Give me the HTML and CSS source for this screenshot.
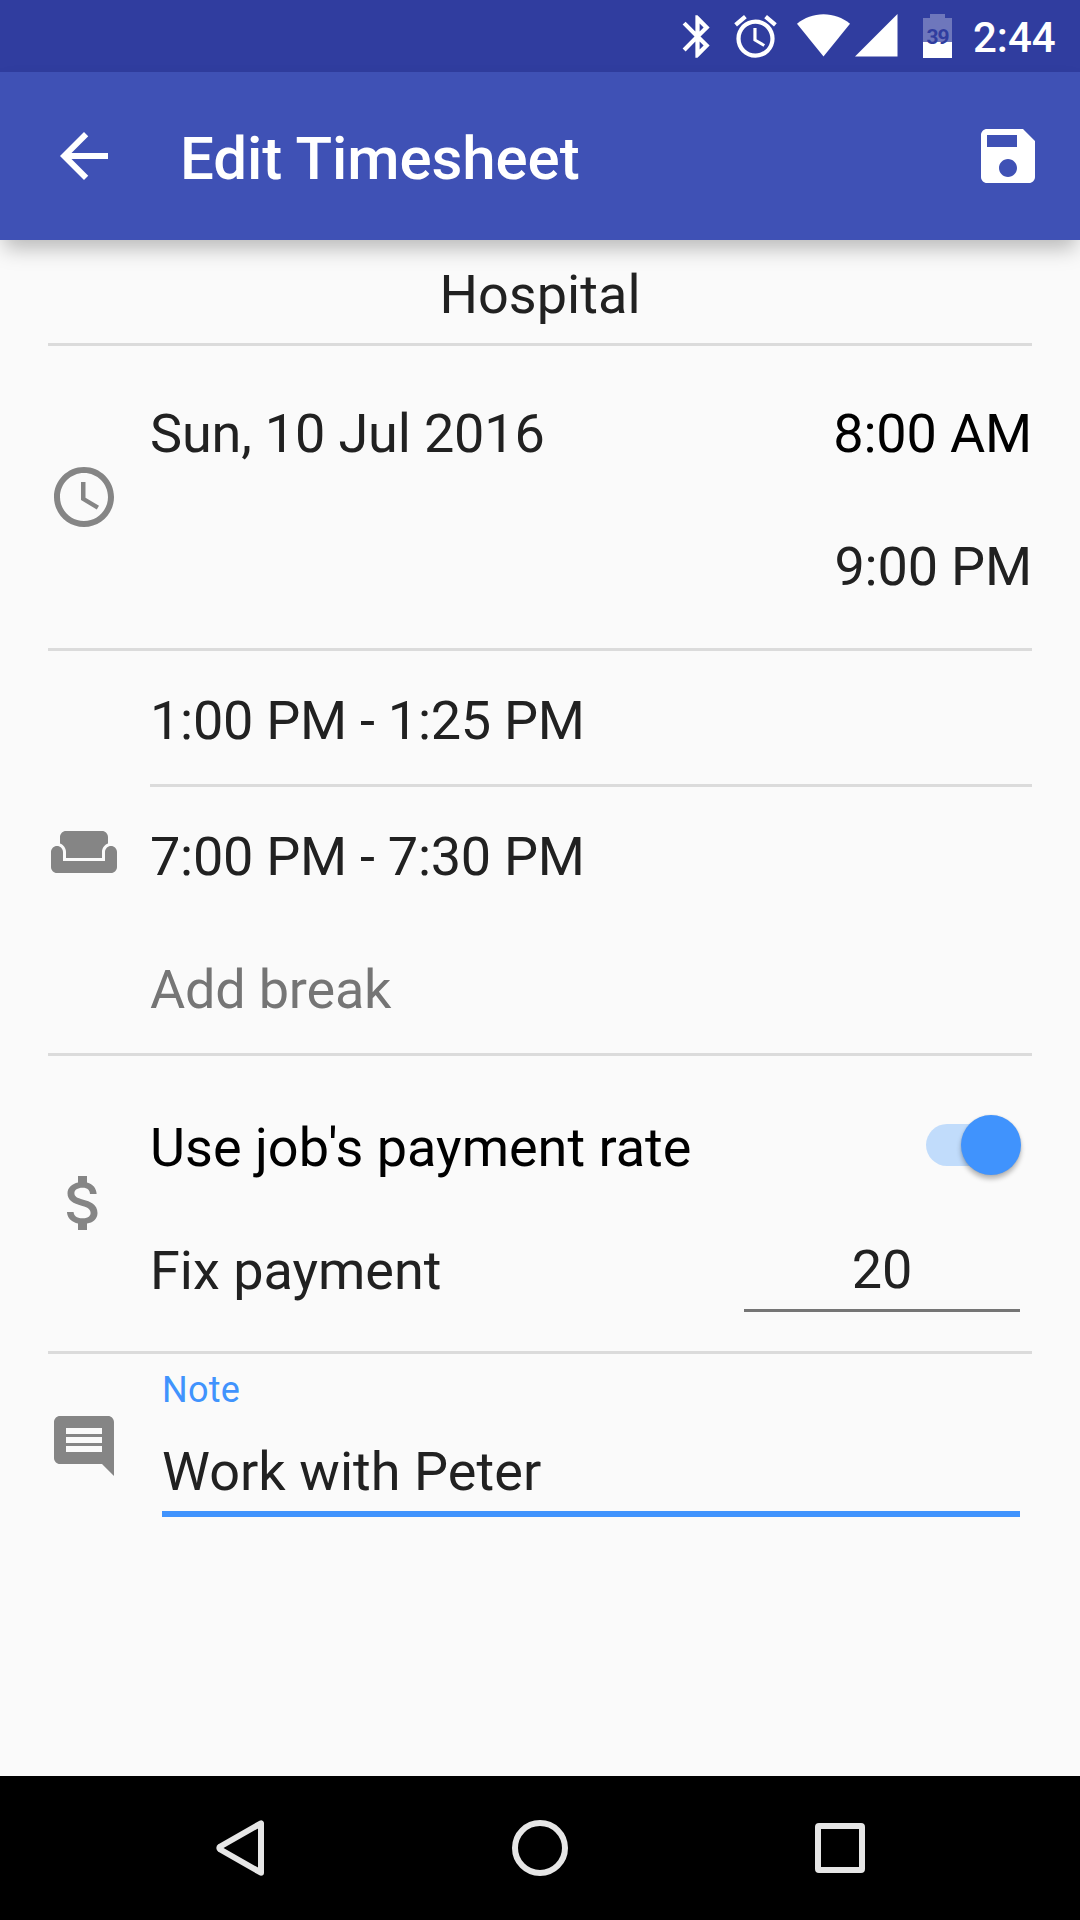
FILE: index.html
```html
<!DOCTYPE html>
<html lang="en">
<head>
<meta charset="utf-8">
<title>Edit Timesheet</title>
<link rel="stylesheet" href="styles.css">
</head>
<body>
<div class="screen">
  <div class="status-bar">
    <svg class="status-bluetooth" viewBox="0 0 24 24"><path d="M17.71 7.71L12 2h-1v7.59L6.41 5 5 6.41 10.59 12 5 17.59 6.41 19 11 14.41V22h1l5.71-5.71-4.3-4.29 4.3-4.29zM13 5.83l1.88 1.88L13 9.59V5.83zm1.88 10.46L13 18.17v-3.76l1.88 1.88z"/></svg>
    <svg class="status-alarm" viewBox="0 0 24 24"><path d="M22 5.72l-4.6-3.86-1.29 1.53 4.6 3.86L22 5.72zM7.88 3.39L6.6 1.86 2 5.71l1.29 1.53 4.59-3.85zM12.5 8H11v6l4.75 2.85.75-1.23-4-2.37V8zM12 4c-4.97 0-9 4.03-9 9s4.02 9 9 9a9 9 0 0 0 0-18zm0 16c-3.87 0-7-3.13-7-7s3.13-7 7-7 7 3.13 7 7-3.12 7-7 7z"/></svg>
    <svg class="status-wifi" viewBox="0 0 53 43"><path d="M26.5 42.5L0 9.7C7.5 3.7 16.500 0.200 26.500 0.200S45.500 3.700 53 9.700z"/></svg>
    <svg class="status-signal" viewBox="0 0 43 43"><path d="M0 42.500H42.500V0z"/></svg>
    <div class="battery">
      <svg viewBox="0 0 29 44"><path opacity=".3" d="M0 4H7V0H22V4H29V28H0z"/><path d="M0 28H29V44H0z"/></svg>
      <span class="battery-level">39</span>
    </div>
    <span class="clock">2:44</span>
  </div>

  <header class="app-bar">
    <svg class="app-icon" viewBox="0 0 24 24"><path d="M20 11H7.830l5.590-5.590L12 4l-8 8 8 8 1.410-1.410L7.830 13H20v-2z"/></svg>
    <h1 class="title">Edit Timesheet</h1>
    <svg class="app-icon" viewBox="0 0 24 24"><path d="M17 3H5c-1.110 0-2 .9-2 2v14c0 1.100.89 2 2 2h14c1.100 0 2-.9 2-2V7l-4-4zm-5 16c-1.660 0-3-1.340-3-3s1.340-3 3-3 3 1.340 3 3-1.340 3-3 3zm3-10H5V5h10v4z"/></svg>
  </header>

  <main class="form">
    <div class="job">Hospital</div>

    <section class="section">
      <svg class="icon" viewBox="0 0 24 24"><path d="M11.990 2C6.470 2 2 6.480 2 12s4.470 10 9.990 10C17.520 22 22 17.520 22 12S17.520 2 11.990 2zM12 20c-4.420 0-8-3.580-8-8s3.580-8 8-8 8 3.580 8 8-3.580 8-8 8zm.5-13H11v6l5.250 3.150.75-1.230-4.500-2.670z"/></svg>
      <div class="rows time-rows">
        <div class="row"><span>Sun, 10 Jul 2016</span><span class="strong">8:00 AM</span></div>
        <div class="row end"><span>9:00 PM</span></div>
      </div>
    </section>

    <section class="section">
      <svg class="icon" viewBox="0 0 24 24"><path d="M21 10c-1.100 0-2 .9-2 2v3H5v-3c0-1.100-.9-2-2-2s-2 .9-2 2v5c0 1.100.9 2 2 2h18c1.100 0 2-.9 2-2v-5c0-1.100-.9-2-2-2zm-3-5H6c-1.100 0-2 .9-2 2v2.150c1.160.41 2 1.510 2 2.820V14h12v-2.030c0-1.300.84-2.400 2-2.810V7c0-1.100-.9-2-2-2z"/></svg>
      <div class="rows">
        <div class="row break-first">1:00 PM - 1:25 PM</div>
        <div class="row break-second">7:00 PM - 7:30 PM</div>
        <div class="row add-break">Add break</div>
      </div>
    </section>

    <section class="section">
      <svg class="icon pay-icon" viewBox="0 0 24 24"><path d="M11.800 10.900c-2.270-.59-3-1.200-3-2.150 0-1.090 1.010-1.850 2.700-1.850 1.780 0 2.440.85 2.500 2.100h2.210c-.07-1.720-1.120-3.300-3.210-3.810V3h-3v2.160c-1.940.42-3.500 1.680-3.500 3.610 0 2.310 1.910 3.460 4.700 4.130 2.500.6 3 1.480 3 2.410 0 .69-.49 1.790-2.700 1.790-2.060 0-2.870-.92-2.980-2.100h-2.200c.12 2.190 1.760 3.420 3.680 3.830V21h3v-2.150c1.950-.37 3.500-1.500 3.500-3.550 0-2.840-2.430-3.810-4.700-4.400z"/></svg>
      <div class="rows pay-rows">
        <div class="row strong">
          <span>Use job's payment rate</span>
          <span class="switch"><span class="thumb"></span></span>
        </div>
        <div class="row pay-row">
          <span>Fix payment</span>
          <span class="amount">20</span>
        </div>
      </div>
    </section>

    <section class="section note-section">
      <svg class="icon note-icon" viewBox="0 0 24 24"><path d="M21.990 4c0-1.100-.89-2-1.990-2H4c-1.100 0-2 .9-2 2v12c0 1.100.9 2 2 2h14l4 4-.01-18zM18 14H6v-2h12v2zm0-3H6V9h12v2zm0-3H6V6h12v2z"/></svg>
      <div class="note">
        <div class="note-label">Note</div>
        <div class="note-value">Work with Peter</div>
      </div>
    </section>
  </main>

  <nav class="nav-bar">
    <svg viewBox="0 0 72 72"><path d="M57 11.300V60.700L16.300 37.500Q14.300 36 16.300 34.500z"/></svg>
    <svg viewBox="0 0 72 72"><circle cx="36" cy="36" r="25"/></svg>
    <svg viewBox="0 0 72 72"><rect x="14" y="14" width="44" height="44" rx="1"/></svg>
  </nav>
</div>
</body>
</html>
```

FILE: styles.css
```css
* { box-sizing: border-box; }

body {
  margin: 0;
  background: #fafafa;
  color: #212121;
  font-family: Roboto, sans-serif;
  font-size: 54px;
  line-height: 64px;
}

svg { display: block; flex: none; }

.screen {
  display: flex;
  flex-direction: column;
  width: 1080px;
  height: 1920px;
  overflow: hidden;
}

.status-bar {
  display: flex;
  align-items: flex-start;
  flex: none;
  height: 72px;
  padding-left: 672px;
  background: #303d9f;
  color: #fff;
  fill: #fff;
}
.status-bluetooth { width: 51px; height: 51px; margin-top: 11px; }
.status-alarm { width: 51px; height: 51px; margin: 11px 0 0 7px; }
.status-wifi { width: 53px; height: 43px; margin: 14px 0 0 16px; }
.status-signal { width: 43px; height: 43px; margin: 14px 0 0 5px; }
.battery { position: relative; width: 29px; height: 44px; margin: 14px 0 0 25px; }
.battery svg { width: 29px; height: 44px; }
.battery-level {
  position: absolute;
  inset: 11px 0 auto;
  color: #303d9f;
  font-size: 21px;
  font-weight: 700;
  letter-spacing: -1px;
  line-height: 24px;
  text-align: center;
}
.clock { margin: 6px 0 0 21px; font-size: 42px; font-weight: 500; }

.app-bar {
  position: relative;
  display: flex;
  align-items: center;
  flex: none;
  height: 168px;
  padding: 0 36px 0 48px;
  background: #3f51b5;
  color: #fff;
  fill: #fff;
  box-shadow: 0 12px 20px -4px rgba(0, 0, 0, .27);
}
.app-icon { width: 72px; height: 72px; }
.title { flex: 1; margin: 6px 0 0 60px; font-size: 60px; font-weight: 500; letter-spacing: -.08px; }

.form { flex: 1; padding: 0 48px; }
.job { height: 103px; padding-top: 23px; text-align: center; letter-spacing: .05px; }

.section {
  display: flex;
  align-items: center;
  border-top: 3px solid #dbdbdb;
}
.icon { width: 72px; height: 72px; margin-right: 30px; fill: #858585; }
.rows { flex: 1; }
.row {
  display: flex;
  align-items: center;
  justify-content: space-between;
  height: 133px;
}
.end { justify-content: flex-end; }
.strong { color: #000; }
.time-rows { padding: 21px 0 15px; letter-spacing: -.16px; }
.break-first { padding-top: 6px; letter-spacing: -.26px; }
.break-second { height: 139px; padding-top: 3px; border-top: 3px solid #dbdbdb; letter-spacing: -.26px; }
.add-break { height: 130px; padding-top: 3px; color: #757575; letter-spacing: -.2px; }

.pay-icon { margin-top: -1px; }
.pay-rows { height: 295px; padding: 30px 12px 0 0; }
.pay-rows .row { height: 123px; }
.switch {
  position: relative;
  width: 85px;
  height: 42px;
  margin: -6px 9px 0 0;
  border-radius: 21px;
  background: #c1dcfb;
}
.thumb {
  position: absolute;
  top: -9px;
  right: -10px;
  width: 60px;
  height: 60px;
  border-radius: 50%;
  background: #4093fd;
  box-shadow: 0 4px 5px rgba(0, 0, 0, .27), 0 0 2px rgba(0, 0, 0, .12);
}
.amount {
  width: 276px;
  height: 76px;
  margin-top: 6px;
  padding-top: 2px;
  border-bottom: 3px solid #757575;
  text-align: center;
}

.note-section { align-items: flex-start; }
.note-icon { margin-top: 56px; }
.note { flex: 1; margin: 14px 12px 0 12px; }
.note-label { color: #4093fd; font-size: 36px; line-height: 44px; letter-spacing: .25px; }
.note-value { height: 105px; padding-top: 28px; border-bottom: 6px solid #4093fd; letter-spacing: .06px; }

.nav-bar {
  display: flex;
  align-items: center;
  justify-content: center;
  gap: 228px;
  flex: none;
  height: 144px;
  background: #000;
}
.nav-bar svg {
  width: 72px;
  height: 72px;
  fill: none;
  stroke: #e6e6e6;
  stroke-width: 6;
  stroke-linejoin: round;
}
```
